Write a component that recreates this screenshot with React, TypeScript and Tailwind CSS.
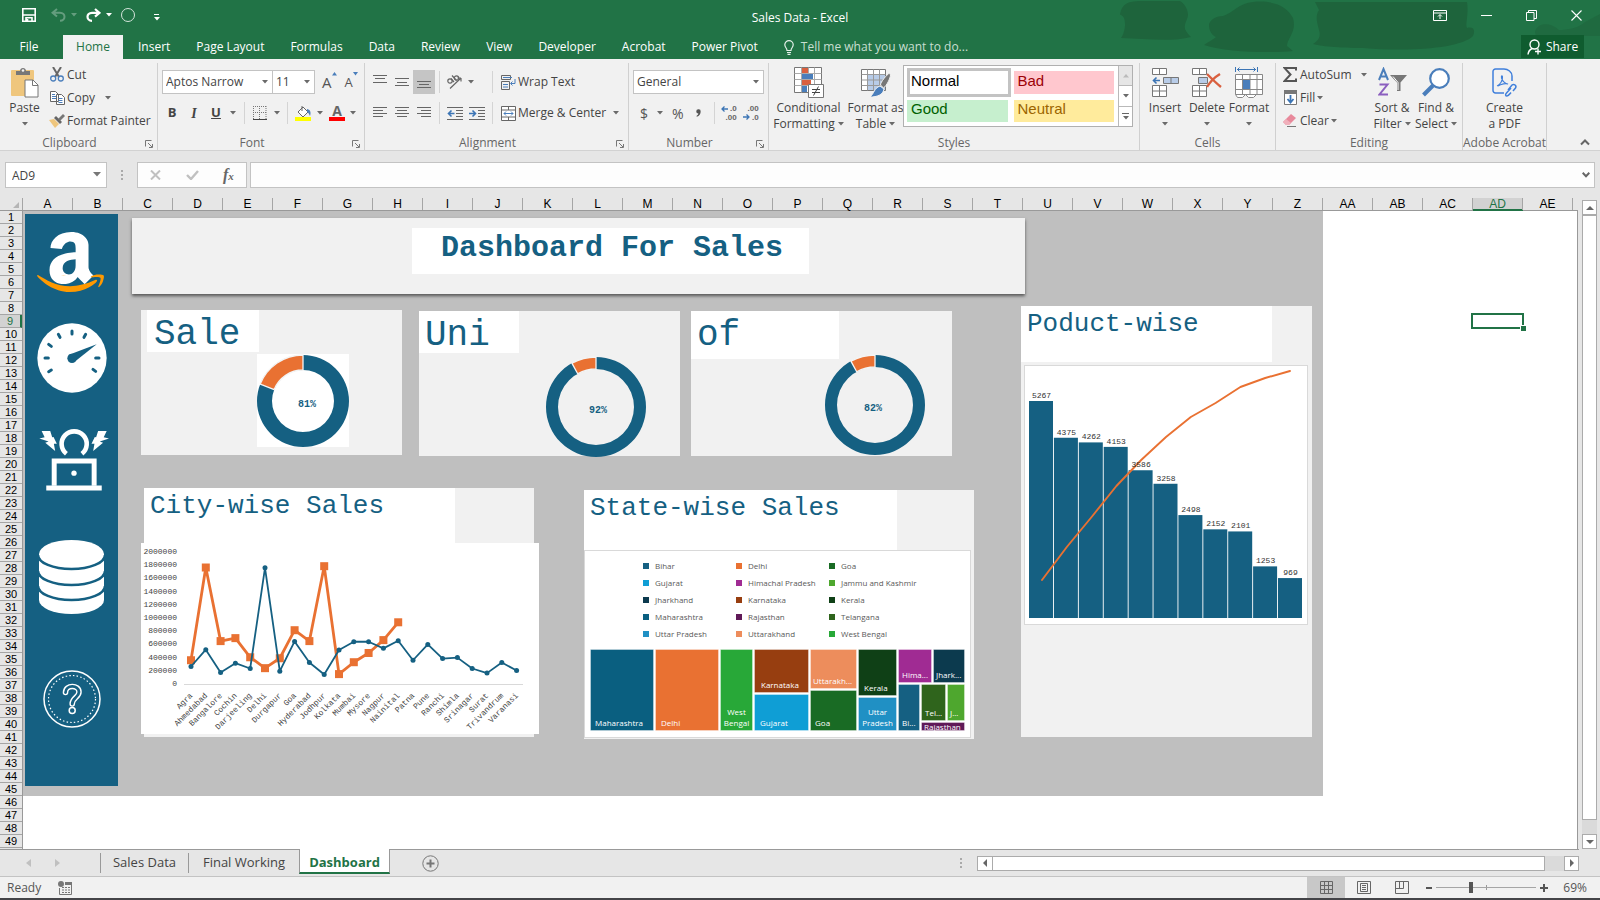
import React from "react";
import { FaAmazon } from "react-icons/fa";

type Kids = { children?: React.ReactNode };

/* ---------- small shared pieces ---------- */

function Caret({ className = "text-[#6a6a6a]" }: { className?: string }) {
  return (
    <svg className={"shrink-0 " + className} width="6" height="4" viewBox="0 0 6 4" fill="currentColor">
      <path d="M0 0h6L3 3.5z" />
    </svg>
  );
}

function Launcher() {
  return (
    <svg width="8" height="8" viewBox="0 0 8 8" fill="none" stroke="#777">
      <path d="M.5 6.5v-6h6M3 3l4 4M7.5 4v3.5H4" />
    </svg>
  );
}

function Group({ label, width, launcher, children }: Kids & { label: string; width: string; launcher?: boolean }) {
  return (
    <section className={"flex shrink-0 flex-col border-r border-[#d0d0d0] " + width}>
      <div className="h-[73px]">{children}</div>
      <div
        className={
          "relative flex h-[14px] items-center justify-center text-[12px] leading-[14px] whitespace-nowrap text-[#666] " +
          (launcher ? "pr-[18px]" : "")
        }
      >
        {label}
        {launcher && (
          <button aria-label={label + " settings"} className="absolute top-[4px] right-[4px]">
            <Launcher />
          </button>
        )}
      </div>
    </section>
  );
}

function BigButton({ icon, lines, width, inlineCaret, caret }: { icon: React.ReactNode; lines: string[]; width: string; inlineCaret?: boolean; caret?: boolean }) {
  return (
    <button className={"flex shrink-0 flex-col items-center pt-[3px] " + width}>
      <span className="mb-[2px] flex h-[32px] items-center justify-center">{icon}</span>
      {lines.map((t, i) => (
        <span key={t} className="flex h-[16px] items-center gap-[3px] whitespace-nowrap">
          {t}
          {inlineCaret && i === lines.length - 1 && <Caret />}
        </span>
      ))}
      {caret && (
        <span className="flex h-[16px] items-center">
          <Caret />
        </span>
      )}
    </button>
  );
}

function SmallButton({ icon, text, caret }: { icon: React.ReactNode; text: string; caret?: boolean }) {
  return (
    <button className="flex h-[23px] items-center gap-[2px] whitespace-nowrap">
      <span className="flex w-[16px] justify-center">{icon}</span>
      <span>{text}</span>
      {caret && <Caret />}
    </button>
  );
}

function Combo({ label, value, width }: { label: string; value: string; width: string }) {
  return (
    <span className={"relative block h-[24px] border border-[#c3c3c3] bg-white " + width}>
      <select aria-label={label} className="block h-full w-full appearance-none bg-transparent pl-[3px] text-[12px] text-[#444] outline-none">
        <option>{value}</option>
      </select>
      <span className="pointer-events-none absolute right-[4px] top-[9px]">
        <Caret />
      </span>
    </span>
  );
}

function Lines({ rows, active }: { rows: [number, number, number][]; active?: boolean }) {
  return (
    <button aria-label="Align" className={"flex h-[24px] w-[22px] items-center justify-center " + (active ? "bg-[#c5c5c5]" : "")}>
      <svg width="14" height="14" viewBox="0 0 14 14" stroke="#666" fill="none">
        {rows.map(([x1, x2, y]) => (
          <path key={y} d={`M${x1} ${y}.5H${x2}`} />
        ))}
      </svg>
    </button>
  );
}

function VSep() {
  return <span className="block h-[22px] w-px shrink-0 bg-[#d4d4d4]" />;
}

/* ---------- title bar and tabs ---------- */

function TitleBar() {
  return (
    <header className="relative bg-[#217346] text-white">
      <svg className="absolute right-0 top-0" width="500" height="59" viewBox="1100 0 500 59" fill="#1e643c">
        <path d="M1120 14C1122 4 1128 1 1140 1h40c4 2 8 8 8 14 0 4-4 8-3 14 2 4 4 6 6 8-18 5-46 2-70 1 4-6 5-14 3-20-2-4-4-2-4-4z" />
        <path d="M1209 25c0-4 6-9 14-9 10-3 16-13 30-14 20-2 34 4 40 16 4 14-6 20-6 28l6 5c-20 2-66 2-89-6 6-4 10-6 12-8-4-2-7-6-7-12z" />
        <path d="M1315 2h152c2 12-2 22 0 26 8-2 8 4 6 8-12 12-60 16-110 12-24 0-44-2-50-4 6-4 8-8 6-14-2-8-4-14 0-20z" />
        <path d="M1535 32c2-10 16-10 24-2 8 0 20-2 26-8l15-8v22h-64z" opacity=".6" />
      </svg>
      <div className="relative flex h-[35px] items-center">
        <div className="flex flex-1 items-center pl-[22px] pb-[5px]">
          <button aria-label="Save">
            <svg width="14" height="14" viewBox="0 0 14 14" fill="none" stroke="#fff" strokeWidth="1.6">
              <path d="M.8.8h12.4v12.4H.8zM1 7h12M4 13V9.8h6V13M5.5 11v2" />
            </svg>
          </button>
          <button aria-label="Undo" className="ml-[15px] flex items-center gap-[5px] opacity-30">
            <svg width="15" height="14" viewBox="0 0 15 14" fill="none" stroke="#fff" strokeWidth="2">
              <path d="M6 1 1.5 4.8 6 8.6M1.5 4.8H9c6 0 6 8 0 8" />
            </svg>
            <Caret className="text-white" />
          </button>
          <button aria-label="Redo" className="ml-[9px] flex items-center gap-[5px]">
            <svg width="15" height="14" viewBox="0 0 15 14" fill="none" stroke="#fff" strokeWidth="2.2">
              <path d="M9 1l4.5 3.8L9 8.6M13.5 4.8H6c-6 0-6 8 0 8" />
            </svg>
            <Caret className="text-white" />
          </button>
          <button aria-label="Touch mode" className="ml-[9px] h-[14px] w-[14px] rounded-full border border-[#d5e5dc]" />
          <button aria-label="Customize toolbar" className="ml-[19px] mt-[4px] flex flex-col gap-[2px]">
            <span className="h-px w-[5px] bg-white" />
            <Caret className="text-white" />
          </button>
        </div>
        <h1 className="-ml-[4px] text-[12px]">Sales Data - Excel</h1>
        <div className="flex flex-1 items-center justify-end gap-[34px] pr-[18px] pb-[5px]">
          <button aria-label="Ribbon display options">
            <svg width="14" height="11" viewBox="0 0 14 11" fill="none" stroke="#fff">
              <path d="M.5.5h13v10H.5zM.5 3h13M7 9V4.8M5 6.5l2-2 2 2" />
            </svg>
          </button>
          <button aria-label="Minimize">
            <svg width="11" height="11" viewBox="0 0 11 11" stroke="#fff">
              <path d="M0 5.5h11" />
            </svg>
          </button>
          <button aria-label="Restore">
            <svg width="11" height="11" viewBox="0 0 11 11" fill="none" stroke="#fff">
              <path d="M.5 2.5h7.5v8H.5zM2.5 2.5v-2h8v8H8" />
            </svg>
          </button>
          <button aria-label="Close">
            <svg width="11" height="11" viewBox="0 0 11 11" stroke="#fff" strokeWidth="1.1">
              <path d="M.5.5l10 10M10.5.5l-10 10" />
            </svg>
          </button>
        </div>
      </div>
      <nav className="relative flex h-[24px] items-stretch text-[12px]">
        <button className="w-[63px] pr-[5px]">File</button>
        <button className="w-[60px] bg-[#f1f1f1] text-[#217346]">Home</button>
        <div className="ml-[15px] flex items-center gap-[26px]">
          {["Insert", "Page Layout", "Formulas", "Data", "Review", "View", "Developer", "Acrobat", "Power Pivot"].map((t) => (
            <button key={t}>{t}</button>
          ))}
          <button className="flex items-center gap-[7px] text-[#c8dfd1]">
            <svg width="10" height="15" viewBox="0 0 10 15" fill="none" stroke="#e4f0e9" strokeWidth="1.2">
              <path d="M3 10.5C3 8 .8 7.5.8 4.8a4.2 4.2 0 0 1 8.4 0C9.2 7.5 7 8 7 10.5zM3 12.5h4M3.5 14.3h3" />
            </svg>
            Tell me what you want to do...
          </button>
        </div>
        <button className="mr-[16px] mb-px ml-auto flex w-[63px] items-center justify-center gap-[4px] bg-[#0f5c2f]">
          <svg width="15" height="16" viewBox="0 0 15 16" fill="none" stroke="#fff" strokeWidth="1.4">
            <circle cx="7.5" cy="5.5" r="4.5" />
            <path d="M1 15.5c.3-3 2-5 4-6M11 9.5v6M8 12.5h6" />
          </svg>
          Share
        </button>
      </nav>
    </header>
  );
}

/* ---------- ribbon ---------- */

function ClipboardGroup() {
  return (
    <Group label="Clipboard" width="w-[158px]" launcher>
      <div className="flex">
        <BigButton
          width="w-[49px]"
          caret
          lines={["Paste"]}
          icon={
            <svg width="29" height="31" viewBox="0 0 29 31">
              <rect x="1" y="3" width="23" height="26" rx="1" fill="#efc67d" />
              <path d="M6 8V4h4c0-4 6-4 6 0h4v4z" fill="#777" />
              <circle cx="13" cy="3.5" r="1.3" fill="#f1f1f1" />
              <path d="M15 13h8l5 5v12H15z" fill="#fff" stroke="#777" />
              <path d="M22.5 13v5.5H28" fill="none" stroke="#777" />
            </svg>
          }
        />
        <div className="flex flex-col items-start">
          <SmallButton
            text="Cut"
            icon={
              <svg width="14" height="15" viewBox="0 0 14 15" fill="none">
                <path d="M3 0l6 10M11 0L5 10" stroke="#666" strokeWidth="2" />
                <circle cx="3.2" cy="11.5" r="2.5" stroke="#4a7ebb" strokeWidth="1.3" />
                <circle cx="10.8" cy="11.5" r="2.5" stroke="#4a7ebb" strokeWidth="1.3" />
              </svg>
            }
          />
          <div className="flex items-center gap-[10px]">
            <SmallButton
              text="Copy"
              icon={
                <svg width="15" height="14" viewBox="0 0 15 14" fill="#fff" stroke="#666">
                  <path d="M.5.5h5l3 3v7h-8zM6.5 3.5h5l3 3v7h-8z" />
                  <path d="M2 3.5h3M2 5.5h4M2 7.5h4M8.5 7.5h4M8.5 9.5h4M8.5 11.5h4" stroke="#4a7ebb" />
                </svg>
              }
            />
            <Caret />
          </div>
          <SmallButton
            text="Format Painter"
            icon={
              <svg width="16" height="14" viewBox="0 0 16 14">
                <path d="M0 6l5-1 5 5-4 4z" fill="#efc67d" />
                <path d="M5 4l2-2 6 6-2 2z" fill="#666" />
                <path d="M9 5l5-5 2 2-5 5z" fill="#777" />
              </svg>
            }
          />
        </div>
      </div>
    </Group>
  );
}

function FontGroup() {
  return (
    <Group label="Font" width="w-[207px]" launcher>
      <div className="flex items-center pt-[7px] pl-[4px]">
        <Combo label="Font name" value="Aptos Narrow" width="w-[111px]" />
        <Combo label="Font size" value="11" width="-ml-px w-[43px]" />
        <button className="ml-[7px] flex items-start text-[15px] leading-[20px] text-[#555]">
          A
          <svg width="5" height="4" viewBox="0 0 5 4" fill="#4a7ebb">
            <path d="M0 3.5h5L2.5 0z" />
          </svg>
        </button>
        <button className="ml-[8px] flex items-start text-[13px] leading-[20px] text-[#555]">
          A
          <svg width="5" height="4" viewBox="0 0 5 4" fill="#4a7ebb">
            <path d="M0 0h5L2.5 3.5z" />
          </svg>
        </button>
      </div>
      <div className="flex h-[38px] items-center pl-[8px] text-[13px] text-[#444]">
        <button className="w-[12px] font-bold">B</button>
        <button className="ml-[10px] w-[12px] font-['Liberation_Serif',serif] text-[14px] font-bold italic">I</button>
        <button className="ml-[10px] w-[12px] font-bold underline">U</button>
        <span className="ml-[8px]"><Caret /></span>
        <span className="mx-[8px]"><VSep /></span>
        <button aria-label="Borders">
          <svg width="14" height="14" viewBox="0 0 14 14" fill="none" stroke="#777">
            <path d="M.5 0v13M6.5 0v13M13 0v13M0 .5h14M0 6.5h14" strokeDasharray="1 1" />
            <path d="M0 13.5h14" stroke="#444" />
          </svg>
        </button>
        <span className="ml-[7px]"><Caret /></span>
        <span className="mx-[7px]"><VSep /></span>
        <button aria-label="Fill colour">
          <svg width="17" height="16" viewBox="0 0 17 16" fill="none">
            <path d="M3 7l5-5 5 5-5 5z" fill="#fff" stroke="#666" />
            <path d="M7 6V1" stroke="#666" />
            <path d="M12 4c4 1 4 4 3 7-1-2-1-3-3-4z" fill="#4a7ebb" />
            <path d="M0 12h16v4H0z" fill="#ff0" />
          </svg>
        </button>
        <span className="ml-[5px]"><Caret /></span>
        <button aria-label="Font colour" className="ml-[6px] flex flex-col items-center text-[14px] leading-[12px] font-bold text-[#666]">
          A
          <span className="h-[4px] w-[16px] bg-[#f00]" />
        </button>
        <span className="ml-[5px]"><Caret /></span>
      </div>
    </Group>
  );
}

function AlignmentGroup() {
  return (
    <Group label="Alignment" width="w-[264px]" launcher>
      <div className="flex items-center pt-[7px] pl-[4px]">
        <Lines rows={[[0, 14, 0], [2, 12, 3], [0, 14, 7]]} />
        <Lines rows={[[0, 14, 3], [2, 12, 7], [0, 14, 10]]} />
        <Lines active rows={[[0, 14, 6], [2, 12, 9], [0, 14, 12]]} />
        <span className="mr-[6px] ml-[4px]"><VSep /></span>
        <button className="flex items-center gap-[5px]" aria-label="Orientation">
          <svg width="17" height="16" viewBox="0 0 17 16" fill="none" stroke="#666" strokeWidth="1.2">
            <path d="M4 14.5L15 4M15 4h-3.5M15 4v3.5" />
            <circle cx="4" cy="7" r="2.2" />
            <path d="M5 4.5l3 3.5M6 1.5l4.5 5" />
            <circle cx="10.5" cy="4" r="2.2" />
          </svg>
          <Caret />
        </button>
        <span className="mr-[7px] ml-[18px]"><VSep /></span>
        <SmallButton
          text="Wrap Text"
          icon={
            <svg width="15" height="15" viewBox="0 0 15 15" fill="none" stroke="#666">
              <path d="M9.5 4.5h-9v-4h9zM.5 6.5h8v8h-8z" />
              <path d="M2 2.5h9M2 9.5h5M2 12h5M14 4v4.5h-4M11.5 6.5l-2 2 2 2" stroke="#4a7ebb" />
            </svg>
          }
        />
      </div>
      <div className="flex h-[38px] items-center pl-[4px]">
        <Lines rows={[[0, 14, 1], [0, 10, 4], [0, 14, 7], [0, 10, 10]]} />
        <Lines rows={[[0, 14, 1], [2, 12, 4], [0, 14, 7], [2, 12, 10]]} />
        <Lines rows={[[0, 14, 1], [4, 14, 4], [0, 14, 7], [4, 14, 10]]} />
        <span className="mr-[7px] ml-[4px]"><VSep /></span>
        <button aria-label="Decrease indent">
          <svg width="16" height="13" viewBox="0 0 16 13" fill="none" stroke="#666">
            <path d="M0 .5h16M9 3.5h7M9 6.5h7M9 9.5h7M0 12.5h16" />
            <path d="M7.5 6.5H2M4.5 3.5l-3 3 3 3" stroke="#3c75b5" strokeWidth="1.6" />
          </svg>
        </button>
        <button aria-label="Increase indent" className="ml-[6px]">
          <svg width="16" height="13" viewBox="0 0 16 13" fill="none" stroke="#666">
            <path d="M0 .5h16M9 3.5h7M9 6.5h7M9 9.5h7M0 12.5h16" />
            <path d="M0 6.5h6M3.5 3.5l3 3-3 3" stroke="#3c75b5" strokeWidth="1.6" />
          </svg>
        </button>
        <span className="mr-[7px] ml-[7px]"><VSep /></span>
        <SmallButton
          text="Merge & Center"
          icon={
            <svg width="15" height="15" viewBox="0 0 15 15" fill="#fff" stroke="#666">
              <path d="M.5.5h14v14H.5zM.5 4h14M.5 11h14M7.5.5V4M7.5 11v3.5" />
              <path d="M3 7.5h9M5 5.5l-2 2 2 2M10 5.5l2 2-2 2" stroke="#4a7ebb" fill="none" />
            </svg>
          }
        />
        <span className="ml-[7px]"><Caret /></span>
      </div>
    </Group>
  );
}

function DecimalIcon({ up }: { up?: boolean }) {
  return (
    <span className="relative flex w-[16px] flex-col items-end font-['Liberation_Sans',Arial,sans-serif] text-[8px] leading-[9px] font-bold text-[#666]">
      <span>{up ? ".0" : ".00"}</span>
      <span>{up ? ".00" : ".0"}</span>
      <svg className={"absolute left-0 " + (up ? "top-[2px]" : "bottom-[2px]")} width="7" height="6" viewBox="0 0 7 6" fill="none" stroke="#3c75b5" strokeWidth="1.3">
        <path d={up ? "M7 3H1M3.5 .5L1 3l2.500 2.500" : "M0 3h6M3.500 .5L6 3 3.500 5.500"} />
      </svg>
    </span>
  );
}

function NumberGroup() {
  return (
    <Group label="Number" width="w-[140px]" launcher>
      <div className="pt-[7px] pl-[4px]">
        <Combo label="Number format" value="General" width="w-[131px]" />
      </div>
      <div className="flex h-[38px] items-center pl-[11px] text-[14px] text-[#555]">
        <button>$</button>
        <span className="ml-[9px]"><Caret /></span>
        <button className="ml-[9px]">%</button>
        <button aria-label="Comma style" className="ml-[12px]">
          <svg width="5" height="8" viewBox="0 0 6 9" fill="#555"><path d="M3 0a2.5 2.5 0 0 1 2.6 2.7C5.6 5.5 4 8 1 9L.6 8c1.4-.7 2.100-1.700 2.200-2.800A2.600 2.600 0 0 1 3 0z" /></svg>
        </button>
        <span className="mr-[6px] ml-[13px]"><VSep /></span>
        <button aria-label="Increase decimal"><DecimalIcon up /></button>
        <button aria-label="Decrease decimal" className="ml-[6px]"><DecimalIcon /></button>
      </div>
    </Group>
  );
}

function StylesGroup() {
  return (
    <Group label="Styles" width="w-[371px]">
      <div className="flex">
        <BigButton
          width="w-[79px]"
          inlineCaret
          lines={["Conditional", "Formatting"]}
          icon={
            <svg width="30" height="31" viewBox="0 0 30 31">
              <path d="M.5.5h27v25H.5z" fill="#fff" stroke="#777" />
              <path d="M.5 6.5h27M.5 12.5h27M.5 18.5h27M7.5.5v25M14.5.5v25M20.5.5v25" stroke="#aaa" />
              <path d="M8 1h6v5H8zM8 13h9v5H8z" fill="#d9603f" />
              <path d="M8 7h11v5H8zM8 19h5v6H8z" fill="#4a7ebb" />
              <path d="M14.5 17.5h15v13h-15z" fill="#fff" stroke="#777" />
              <path d="M18 22.5h8M18 25.5h8M24.5 19.5l-5 9" stroke="#444" fill="none" />
            </svg>
          }
        />
        <BigButton
          width="w-[55px]"
          inlineCaret
          lines={["Format as", "Table"]}
          icon={
            <svg width="30" height="29" viewBox="0 0 30 29">
              <path d="M.5 1.5h24v21H.5z" fill="#fff" stroke="#777" />
              <path d="M6 7h18v15H6z" fill="#b8cce8" />
              <path d="M.5 6.5h24M.5 12h24M.5 17.5h24M6.5 1.5v21M12.5 1.5v21M18.5 1.5v21" stroke="#999" />
              <path d="M28.5 5c-3 2-9 9-9 12l3 3c3-2 7-10 7-13z" fill="#777" stroke="#f1f1f1" />
              <path d="M19 18l4 3c-1 6-7 8-14 8 4-3 4-9 10-11z" fill="#4a7ebb" stroke="#f1f1f1" />
            </svg>
          }
        />
        <div className="mt-[2px] flex h-[62px] w-[230px] border border-[#b0b0b0] bg-white font-['Liberation_Sans',Arial,sans-serif] text-[15px] leading-[18px]">
          <div className="grid flex-1 grid-cols-2 gap-x-[6px] gap-y-[6px] p-[4px] pt-[5px] pl-[3px]">
            <button className="-my-[3px] -mr-[3px] border-[3px] border-[#c3c3c3] bg-white pb-[3px] pl-[1px] text-left text-black">Normal</button>
            <button className="bg-[#ffc7ce] pb-[3px] pl-[4px] text-left text-[#9c0006]">Bad</button>
            <button className="bg-[#c6efce] pb-[3px] pl-[4px] text-left text-[#006100]">Good</button>
            <button className="bg-[#ffeb9c] pb-[3px] pl-[4px] text-left text-[#9c6500]">Neutral</button>
          </div>
          <div className="flex w-[14px] flex-col divide-y divide-[#b9b9b9] border-l border-[#b9b9b9]">
            <button aria-label="Scroll styles up" className="flex flex-1 items-center justify-center bg-[#e6e6e6]">
              <svg width="6" height="4" viewBox="0 0 6 4" fill="#bbb"><path d="M0 3.5h6L3 0z" /></svg>
            </button>
            <button aria-label="Scroll styles down" className="flex flex-1 items-center justify-center"><Caret /></button>
            <button aria-label="More styles" className="flex flex-1 flex-col items-center justify-center gap-[2px]">
              <span className="h-px w-[7px] bg-[#666]" />
              <Caret />
            </button>
          </div>
        </div>
      </div>
    </Group>
  );
}

function CellsGroup() {
  return (
    <Group label="Cells" width="w-[136px]">
      <div className="flex pl-[4px]">
        <BigButton
          width="w-[42px]"
          caret
          lines={["Insert"]}
          icon={
            <svg width="27" height="29" viewBox="0 0 27 29" fill="#fff" stroke="#777">
              <path d="M.5.5h14v6H.5zM7.5.5v6M.5 17.5h14v11H.5zM.5 23h14M7.5 17.5v11" />
              <path d="M11.5 9.5h15v6h-15zM19 9.5v6" fill="#b8cce8" />
              <path d="M8 12.5H2M4.5 9.5l-3 3 3 3" stroke="#3c75b5" strokeWidth="1.6" fill="none" />
            </svg>
          }
        />
        <BigButton
          width="w-[42px]"
          caret
          lines={["Delete"]}
          icon={
            <svg width="30" height="29" viewBox="0 0 30 29" fill="#fff" stroke="#777">
              <path d="M.5.5h14v6H.5zM7.5.5v6M.5 17.5h14v11H.5zM.5 23h14M7.5 17.5v11" />
              <path d="M6.5 9.5h9v6h-9z" fill="#b8cce8" />
              <path d="M15 6c4 4 9 9 14 13M28 6c-5 3-10 8-13 13" stroke="#d9603f" strokeWidth="2.4" fill="none" />
            </svg>
          }
        />
        <BigButton
          width="w-[42px]"
          caret
          lines={["Format"]}
          icon={
            <svg width="28" height="31" viewBox="0 0 28 31" fill="#fff" stroke="#888">
              <path d="M.5 7.5h27v20H.5zM.5 12.5h27M.5 22.5h27M7.5 7.5v20M15 7.5v20M22 7.5v20M.5 27.5l2 3h5l3-3 3 3h5l3-3" />
              <path d="M8 13h7v9H8z" fill="#4a7ebb" stroke="none" />
              <path d="M.5 0v5M22.5 0v5M2 2.5h19M4.5.5l-2 2 2 2M18.5.5l2 2-2 2" stroke="#3c75b5" fill="none" />
            </svg>
          }
        />
      </div>
    </Group>
  );
}

function EditingGroup() {
  return (
    <Group label="Editing" width="w-[187px]">
      <div className="flex">
        <div className="flex w-[94px] flex-col items-start pl-[6px]">
          <div className="flex items-center gap-[9px]">
            <SmallButton
              text="AutoSum"
              icon={
                <svg width="14" height="15" viewBox="0 0 14 15" fill="none" stroke="#555" strokeWidth="2">
                  <path d="M13 3.5V1H1.5l6 6.5-6 6.5H13v-2.5" />
                </svg>
              }
            />
            <Caret />
          </div>
          <SmallButton
            text="Fill"
            caret
            icon={
              <svg width="13" height="15" viewBox="0 0 13 15" fill="#fff" stroke="#777">
                <path d="M.5.5h12v14H.5z" />
                <path d="M0 0h13v4H0z" fill="#777" stroke="none" />
                <path d="M6.5 5v7M3.5 9l3 3.5 3-3.5" stroke="#3c75b5" strokeWidth="1.8" fill="none" />
              </svg>
            }
          />
          <SmallButton
            text="Clear"
            caret
            icon={
              <svg width="14" height="13" viewBox="0 0 14 13">
                <path d="M8 0l5 4-7 7H3L0 8z" fill="#e8899b" />
                <path d="M3 5l5 4-2 2H3L0 8z" fill="#f0b0bb" />
                <path d="M4 12.5h9" stroke="#777" />
              </svg>
            }
          />
        </div>
        <BigButton
          width="w-[44px]"
          inlineCaret
          lines={["Sort &", "Filter"]}
          icon={
            <svg width="29" height="30" viewBox="0 0 29 30" fill="none">
              <path d="M1 13L5.5 2 10 13M2.5 9.5h6" stroke="#4a7ebb" strokeWidth="2" />
              <path d="M1.5 17.5h8L1.5 27.5h8.500" stroke="#8b5fbf" strokeWidth="2" />
              <path d="M12 8h17l-6.500 7.500V24h-3.500v-8.500z" fill="#777" />
              <path d="M15 9.500l5 6V23" stroke="#fff" />
            </svg>
          }
        />
        <BigButton
          width="w-[44px]"
          inlineCaret
          lines={["Find &", "Select"]}
          icon={
            <svg width="28" height="29" viewBox="0 0 28 29" fill="none">
              <circle cx="17.5" cy="10.5" r="9.3" fill="#fff" stroke="#4a7ebb" strokeWidth="2.2" />
              <path d="M11 17.5L1.5 27" stroke="#4a7ebb" strokeWidth="4" />
            </svg>
          }
        />
      </div>
    </Group>
  );
}

function AcrobatGroup() {
  return (
    <Group label="Adobe Acrobat" width="w-[84px]">
      <div className="flex justify-center">
        <BigButton
          width="w-[60px]"
          lines={["Create", "a PDF"]}
          icon={
            <svg width="26" height="29" viewBox="0 0 26 29" fill="none" stroke="#3f7fdb" strokeWidth="1.5">
              <path d="M12 25H3.5A2.5 2.5 0 0 1 1 22.5V3.5A2.5 2.5 0 0 1 3.5 1H12c4 0 8 3 8 7v5" />
              <path d="M5 18c3-1 6-6 5.500-9 0-2-1.500-1.500-1 1 .8 3 4 6 6.500 6-2-1-7 0-10 2" strokeWidth="1.1" />
              <path d="M16 22l4-5c2-1.500 5 .5 3.500 3L21 23M19 20l-4.500 5c-1.500 1.500-1 3 .5 3 1.500 0 2-1 4-3.500" />
            </svg>
          }
        />
      </div>
    </Group>
  );
}

function Ribbon() {
  return (
    <div className="flex h-[92px] overflow-hidden border-b border-[#d2d2d2] bg-[#f1f1f1] pt-[4px] text-[12px] text-[#444]">
      <ClipboardGroup />
      <FontGroup />
      <AlignmentGroup />
      <NumberGroup />
      <StylesGroup />
      <CellsGroup />
      <EditingGroup />
      <AcrobatGroup />
      <button aria-label="Collapse ribbon" className="mr-[10px] mb-[4px] ml-auto self-end">
        <svg width="10" height="7" viewBox="0 0 10 7" fill="none" stroke="#666" strokeWidth="2">
          <path d="M1 5.5l4-4 4 4" />
        </svg>
      </button>
    </div>
  );
}

/* ---------- formula bar ---------- */

function FormulaBar() {
  return (
    <div className="flex h-[47px] items-start bg-[#e6e6e6] pt-[11px] pr-[5px] pl-[5px]">
      <div className="relative h-[26px] w-[102px] border border-[#c3c3c3] bg-white">
        <input aria-label="Name box" defaultValue="AD9" className="block h-full w-full bg-transparent pl-[6px] text-[12px] text-[#444] outline-none" />
        <svg className="absolute top-[9px] right-[5px]" width="8" height="5" viewBox="0 0 8 5" fill="#777"><path d="M0 0h8L4 4.5z" /></svg>
      </div>
      <div className="mx-[14px] flex h-[26px] flex-col justify-center gap-[2px]">
        <span className="h-[2px] w-[2px] bg-[#aaa]" />
        <span className="h-[2px] w-[2px] bg-[#aaa]" />
        <span className="h-[2px] w-[2px] bg-[#aaa]" />
      </div>
      <div className="flex h-[26px] w-[110px] items-center justify-around border border-[#c3c3c3] bg-[#fdfdfd]">
        <button aria-label="Cancel">
          <svg width="11" height="10" viewBox="0 0 11 10" stroke="#c0c0c0" strokeWidth="2"><path d="M1 .5l9 9M10 .5l-9 9" /></svg>
        </button>
        <button aria-label="Enter">
          <svg width="13" height="10" viewBox="0 0 13 10" fill="none" stroke="#c0c0c0" strokeWidth="2.4"><path d="M1 5l4 4 7-8" /></svg>
        </button>
        <button className="font-['Liberation_Serif',serif] text-[16px] leading-none font-bold text-[#666] italic">
          f<span className="text-[11px]">x</span>
        </button>
      </div>
      <div className="relative ml-[3px] h-[26px] flex-1 border border-[#c3c3c3] bg-[#fdfdfd]">
        <input aria-label="Formula" className="h-full w-full bg-transparent px-2 text-[12px] outline-none" />
        <svg className="absolute top-[9px] right-[4px]" width="8" height="6" viewBox="0 0 8 6" fill="none" stroke="#666" strokeWidth="2"><path d="M.7.8L4 4.2 7.3.8" /></svg>
      </div>
    </div>
  );
}

/* ---------- charts and dashboard cards ---------- */

function Heading({ children, className }: Kids & { className: string }) {
  return (
    <h2 className={"absolute bg-white font-['Liberation_Mono','Courier_New',monospace] whitespace-nowrap text-[#156082] " + className}>{children}</h2>
  );
}

function Donut({ className, label, labelX, share, r, hole }: { className: string; label: string; labelX: number; share: number; r: number; hole: number }) {
  const a = share * 2 * Math.PI;
  const p = (d: number) => `${-Math.sin(a) * d} ${-Math.cos(a) * d}`;
  return (
    <svg className={"absolute " + className} viewBox={`${-r - 1} ${-r - 1} ${2 * r + 2} ${2 * r + 2}`}>
      <path fillRule="evenodd" fill="#156082" d={`M${-r} 0a${r} ${r} 0 1 0 ${2 * r} 0a${r} ${r} 0 1 0 ${-2 * r} 0zM${-hole} 0a${hole} ${hole} 0 1 0 ${2 * hole} 0a${hole} ${hole} 0 1 0 ${-2 * hole} 0z`} />
      <path fill="#e97132" stroke="#f4f4f4" strokeWidth="1.3" d={`M0 ${-r}A${r} ${r} 0 0 0 ${p(r)}L${p(hole)}A${hole} ${hole} 0 0 1 0 ${-hole}z`} />
      <text x={labelX} y="6" textAnchor="middle" className="fill-[#156082] font-['Liberation_Mono','Courier_New',monospace] text-[10px] font-bold">{label}</text>
    </svg>
  );
}

const cities = ["Agra", "Ahmedabad", "Bangalore", "Cochin", "Darjeeling", "Delhi", "Durgapur", "Goa", "Hyderabad", "Jodhpur", "Kolkata", "Mumbai", "Mysore", "Nagpur", "Nainital", "Patna", "Pune", "Ranchi", "Shimla", "Srinagar", "Surat", "Trivandrum", "Varanasi"];
const lastYear = [360, 1765, 650, 695, 405, 240, 390, 815, 650, 1785, 150, 330, 470, 665, 935];
const thisYear = [265, 520, 175, 315, 235, 1760, 195, 645, 325, 145, 515, 640, 640, 540, 655, 360, 600, 385, 400, 235, 165, 325, 205];

function CityChart() {
  const x = (i: number) => 50 + i * 14.8;
  const y = (v: number) => 141 - v * 0.066;
  const line = (d: number[]) => d.map((v, i) => `${x(i)},${y(v)}`).join(" ");
  return (
    <svg className="absolute top-[332px] left-[118px] h-[191px] w-[398px] bg-white font-['Liberation_Mono','Courier_New',monospace] text-[8px]" viewBox="0 0 398 191">
      {[0, 200, 400, 600, 800, 1000, 1200, 1400, 1600, 1800, 2000].map((v) => (
        <text key={v} x="36" y={y(v) + 2} textAnchor="end" fill="#444">{v * 1000}</text>
      ))}
      <path d="M43 141.5H382" stroke="#d9d9d9" />
      <polyline points={line(lastYear)} fill="none" stroke="#e97132" strokeWidth="2.8" strokeLinejoin="round" />
      {lastYear.map((v, i) => (
        <rect key={i} x={x(i) - 4} y={y(v) - 4} width="8" height="8" fill="#e97132" />
      ))}
      <polyline points={line(thisYear)} fill="none" stroke="#156082" strokeWidth="1.8" strokeLinejoin="round" />
      {thisYear.map((v, i) => (
        <circle key={i} cx={x(i)} cy={y(v)} r="2.5" fill="#156082" />
      ))}
      {cities.map((c, i) => (
        <text key={c} textAnchor="end" fill="#444" transform={`translate(${x(i) + 2} 153) rotate(-45)`}>{c}</text>
      ))}
    </svg>
  );
}

const states: [string, string][] = [
  ["Bihar", "#156082"], ["Delhi", "#e97132"], ["Goa", "#196b24"],
  ["Gujarat", "#0f9ed5"], ["Himachal Pradesh", "#a02b93"], ["Jammu and Kashmir", "#4ea72e"],
  ["Jharkhand", "#0c3a4e"], ["Karnataka", "#973e10"], ["Kerala", "#0f4016"],
  ["Maharashtra", "#0a5f80"], ["Rajasthan", "#601a58"], ["Telangana", "#2f641c"],
  ["Uttar Pradesh", "#2090c4"], ["Uttarakhand", "#ed8d5c"], ["West Bengal", "#28a838"],
];

/* x, y, width, height, colour, label lines, label inset */
const tiles: [number, number, number, number, string, string[], number][] = [
  [5, 98, 64, 82, "#0a5f80", ["Maharashtra"], 5],
  [70, 98, 64, 82, "#e97132", ["Delhi"], 6],
  [135, 98, 33, 82, "#28a838", ["West", "Bengal"], 0],
  [169, 98, 55, 44, "#973e10", ["Karnataka"], 7],
  [169, 143, 55, 37, "#0f9ed5", ["Gujarat"], 6],
  [225, 98, 47, 40, "#ed8d5c", ["Uttarakh..."], 3],
  [225, 139, 47, 41, "#196b24", ["Goa"], 5],
  [273, 98, 39, 47, "#0f4016", ["Kerala"], 6],
  [273, 146, 39, 34, "#2090c4", ["Uttar", "Pradesh"], 0],
  [313, 98, 34, 34, "#a02b93", ["Hima..."], 4],
  [348, 98, 32, 34, "#0c3a4e", ["Jhark..."], 3],
  [313, 133, 22, 47, "#156082", ["Bi..."], 4],
  [336, 133, 25, 37, "#2f641c", ["Tel..."], 4],
  [362, 133, 18, 37, "#4ea72e", ["J..."], 3],
  [336, 171, 44, 9, "#601a58", ["Rajasthan"], 3],
];

function StateChart() {
  return (
    <svg className="absolute top-[339px] left-[561px] h-[188px] w-[387px] border border-[#d9d9d9] bg-white text-[8px]" viewBox="0 0 385 186">
      {states.map(([name, color], i) => {
        const cx = 57 + (i % 3) * 93;
        const cy = 15 + Math.floor(i / 3) * 17;
        return (
          <g key={name}>
            <rect x={cx + 1} y={cy - 3} width="6" height="6" fill={color} />
            <text x={cx + 13} y={cy + 3} fill="#595959">{name}</text>
          </g>
        );
      })}
      {tiles.map(([x, y, w, h, color, label, inset]) => (
        <g key={label[0] + x}>
          <rect x={x + 0.5} y={y + 0.5} width={w - 1} height={h - 1} fill={color} stroke="#fff" strokeOpacity=".35" />
          {label.map((t, i) => (
            <text
              key={t}
              fill="#fff"
              x={inset ? x + inset : x + w / 2}
              textAnchor={inset ? "start" : "middle"}
              y={y + h - (h < 12 ? 1 : 5) - (label.length - 1 - i) * 11}
              className="font-medium"
            >
              {t}
            </text>
          ))}
        </g>
      ))}
    </svg>
  );
}

const products = [5267, 4375, 4262, 4153, 3586, 3258, 2498, 2152, 2101, 1253, 969];
const cumulative = [45, 78, 108, 139, 165, 188, 208, 222, 238, 247, 254];

function ProductChart() {
  return (
    <svg className="absolute top-[154px] left-[1001px] h-[260px] w-[284px] border border-[#d9d9d9] bg-white font-['Liberation_Mono','Courier_New',monospace] text-[8px]" viewBox="0 0 282 258">
      {products.map((v, i) => {
        const h = v * 0.0412;
        const x = 4 + i * 24.9;
        return <rect key={v} x={x} y={252 - h} width="24" height={h} fill="#156082" />;
      })}
      <polyline points={cumulative.map((v, i) => `${17 + i * 24.8},${259 - v}`).join(" ")} fill="none" stroke="#e97132" strokeWidth="1.9" strokeLinejoin="round" strokeLinecap="round" />
      {products.map((v, i) => (
        <text key={v} x={16.5 + i * 24.9} y={249 - v * 0.0412} textAnchor="middle" fill="#333">{v}</text>
      ))}
    </svg>
  );
}

function Sidebar() {
  return (
    <aside className="absolute top-[3px] left-[2px] flex h-[572px] w-[93px] flex-col items-center bg-[#156082] pt-[13px]">
      <a href="#home" aria-label="Home" className="relative h-[79px] w-[71px]">
        <FaAmazon className="absolute h-[79px] w-[69px] text-white [clip-path:polygon(0_0,100%_0,100%_69%,77%_69%,77%_72.3%,0_72.3%)]" />
        <FaAmazon className="absolute -top-[9px] h-[79px] w-[69px] text-[#ff9900] [clip-path:polygon(0_72.3%,77%_72.3%,77%_69%,100%_69%,100%_100%,0_100%)]" />
      </a>
      <a href="#performance" aria-label="Performance" className="mt-[17px]">
        <svg width="70" height="70" viewBox="112 400 210 210">
          <circle cx="217" cy="505" r="104" fill="#fff" />
          <g stroke="#156082" strokeWidth="9" strokeLinecap="round">
            <path d="M217 424v9M258 434l-5 9M176 434l5 9M147 464l8 6M136 505h10M288 505h10M147 546l8-5M280 539l8 6" />
          </g>
          <path d="M206 496L291 464 225 516z" fill="#156082" />
          <circle cx="217" cy="506" r="14" fill="#156082" />
        </svg>
      </a>
      <a href="#stress" aria-label="Workload" className="mt-[37px]">
        <svg width="70" height="62" viewBox="44 90 212 186" fill="none" stroke="#fff" className="translate-x-[2px] overflow-visible">
          <path d="M127 161A38 38 0 1 1 174 161" strokeWidth="14" />
          <path d="M90 258v-75h121v75" strokeWidth="15" />
          <path d="M66 265h168" strokeWidth="15" />
          <circle cx="150" cy="220" r="8" fill="#fff" stroke="none" />
          <path d="M52 92h26l6 19 4-1 10 21-9 0 4 22-30-25 10-4-28-9 16-4zM249 92h-26l-6 19-4-1-10 21 9 0-4 22 30-25-10-4 28-9-16-4z" fill="#fff" stroke="none" />
        </svg>
      </a>
      <a href="#data" aria-label="Data" className="mt-[48px]">
        <svg width="65" height="74" viewBox="0 0 65 74">
          <path d="M0 14a32.5 14 0 0 1 65 0v46a32.5 14 0 0 1-65 0z" fill="#fff" />
          <path d="M-1 15a33.5 14 0 0 0 67 0M-1 31a33.5 14 0 0 0 67 0M-1 46a33.5 14 0 0 0 67 0" fill="none" stroke="#156082" strokeWidth="2.6" />
        </svg>
      </a>
      <a href="#help" aria-label="Help" className="mt-[56px]">
        <svg width="58" height="58" viewBox="0 0 58 58" fill="none" stroke="#fff">
          <circle cx="29" cy="29" r="28" strokeWidth="1.5" />
          <circle cx="29" cy="29" r="23.5" strokeWidth="1.2" strokeDasharray="1.5 2.2" />
          <g strokeLinecap="round" strokeLinejoin="round">
            <path d="M22.5 22.5c0-8 13.5-8 13.5-.5 0 5.5-6.800 5.500-6.800 12" strokeWidth="5.6" />
            <path d="M22.5 22.5c0-8 13.5-8 13.5-.5 0 5.5-6.800 5.500-6.800 12" strokeWidth="2.8" stroke="#156082" />
          </g>
          <circle cx="29.2" cy="40.5" r="3" strokeWidth="1.5" />
        </svg>
      </a>
    </aside>
  );
}

function Dashboard() {
  return (
    <div className="absolute top-0 left-0 h-[585px] w-[1300px] bg-[#bfbfbf]">
      <Sidebar />
      <div className="absolute top-[7px] left-[109px] h-[76px] w-[893px] bg-[#f1f1f1] shadow-[0_2px_3px_#555]">
        <Heading className="top-[10px] left-[280px] h-[46px] w-[397px] pl-[29px] text-[30px] leading-[40px] font-bold">Dashboard For Sales</Heading>
      </div>
      <div className="absolute top-[99px] left-[118px] h-[145px] w-[261px] bg-[#f1f1f1]">
        <Heading className="top-0 left-[6px] h-[42px] w-[112px] pl-[7px] text-[36px] leading-[50px]">Sale</Heading>
        <span className="absolute top-[44px] left-[116px] h-[93px] w-[92px] bg-white" />
        <Donut className="top-[44px] left-[115px] h-[94px] w-[94px]" label="81%" labelX={4} share={0.19} r={46} hole={31} />
      </div>
      <div className="absolute top-[100px] left-[396px] h-[145px] w-[261px] bg-[#f1f1f1]">
        <Heading className="top-0 left-0 h-[42px] w-[100px] pl-[6px] text-[36px] leading-[50px]">Uni</Heading>
        <Donut className="top-[45px] left-[126px] h-[102px] w-[102px]" label="92%" labelX={2} share={0.08} r={50} hole={38} />
      </div>
      <div className="absolute top-[100px] left-[668px] h-[145px] w-[261px] bg-[#f1f1f1]">
        <Heading className="top-0 left-0 h-[48px] w-[148px] pl-[6px] text-[36px] leading-[50px]">of</Heading>
        <Donut className="top-[43px] left-[133px] h-[102px] w-[102px]" label="82%" labelX={-2} share={0.08} r={50} hole={38} />
      </div>
      <div className="absolute top-[277px] left-[121px] h-[249px] w-[390px] bg-[#f1f1f1]">
        <Heading className="top-0 left-0 h-[56px] w-[311px] pl-[6px] text-[26px] leading-[36px]">City-wise Sales</Heading>
      </div>
      <CityChart />
      <div className="absolute top-[279px] left-[561px] h-[249px] w-[390px] bg-[#f1f1f1]">
        <Heading className="top-0 left-0 h-[60px] w-[313px] pl-[6px] text-[26px] leading-[36px]">State-wise Sales</Heading>
      </div>
      <StateChart />
      <div className="absolute top-[95px] left-[998px] h-[431px] w-[291px] bg-[#f1f1f1]">
        <Heading className="top-0 left-0 h-[56px] w-[251px] pl-[6px] text-[26px] leading-[36px]">Poduct-wise</Heading>
      </div>
      <ProductChart />
    </div>
  );
}

/* ---------- sheet ---------- */

const columns = [..."ABCDEFGHIJKLMNOPQRSTUVWXYZ".split(""), "AA", "AB", "AC", "AD", "AE"];
const rows = Array.from({ length: 49 }, (_, i) => i + 1);

function ScrollArrow({ d, label, className }: { d: string; label: string; className: string }) {
  return (
    <button aria-label={label} className={"flex shrink-0 items-center justify-center border border-[#ababab] bg-white " + className}>
      <svg width="8" height="8" viewBox="0 0 8 8" fill="#666"><path d={d} /></svg>
    </button>
  );
}

function Sheet() {
  return (
    <main className="flex bg-[#e6e6e6]">
      <div className="flex min-w-0 flex-1 flex-col">
        <div className="flex h-[13px] border-b border-[#999] font-['Liberation_Sans',Arial,sans-serif] text-[12px] leading-[12px] text-black">
          <div className="flex w-[23px] shrink-0 items-end justify-end border-r border-[#a5a5a5] pr-[3px] pb-[2px]">
            <svg width="6" height="6" viewBox="0 0 6 6" fill="#b5b5b5"><path d="M6 0v6H0z" /></svg>
          </div>
          {columns.map((c) => (
            <div
              key={c}
              className={
                "h-[12px] w-[50px] shrink-0 border-r border-[#a5a5a5] text-center " +
                (c === "AD" ? "bg-[#d2d2d2] text-[#217346] shadow-[0_1px_0_#217346,inset_0_-1px_0_#217346]" : "")
              }
            >
              {c}
            </div>
          ))}
        </div>
        <div className="flex flex-1">
          <div className="w-[23px] shrink-0 border-r border-[#999] pb-px font-['Liberation_Sans',Arial,sans-serif] text-[11px] leading-[12px] text-black">
            {rows.map((r) => (
              <div
                key={r}
                className={
                  "h-[13px] border-b border-[#a5a5a5] text-center " +
                  (r === 9 ? "border-r-2 border-r-[#217346] bg-[#d2d2d2] text-[#217346]" : "")
                }
              >
                {r}
              </div>
            ))}
          </div>
          <div className="relative flex-1 overflow-hidden border-r border-[#999] bg-white">
            <Dashboard />
            <div className="absolute top-[102px] left-[1448px] h-[16px] w-[53px] border-2 border-[#217346]">
              <span className="absolute -right-[4px] -bottom-[4px] h-[6px] w-[6px] border-t border-l border-white bg-[#217346]" />
            </div>
          </div>
        </div>
      </div>
      <div className="ml-[4px] mr-[3px] flex w-[15px] flex-col pt-[2px]">
        <ScrollArrow label="Scroll up" d="M0 6h8L4 2z" className="h-[15px]" />
        <div className="flex flex-1 flex-col bg-[#dadada]">
          <div className="mb-[14px] flex-1 border border-[#ababab] bg-white" />
        </div>
        <ScrollArrow label="Scroll down" d="M0 2h8L4 6z" className="h-[15px]" />
      </div>
    </main>
  );
}

function SheetTabs() {
  return (
    <div className="flex h-[28px] bg-[#e6e6e6] text-[13px] text-[#444]">
      <div className="flex flex-1 border-b border-[#c3c3c3]">
        <div className="flex w-[299px] border-t border-[#999]">
          <button aria-label="Previous sheet" className="ml-[26px]">
            <svg width="5" height="8" viewBox="0 0 5 8" fill="#c0c0c0"><path d="M5 0v8L0 4z" /></svg>
          </button>
          <button aria-label="Next sheet" className="ml-[24px]">
            <svg width="5" height="8" viewBox="0 0 5 8" fill="#c0c0c0"><path d="M0 0v8l5-4z" /></svg>
          </button>
          <button className="mt-[3px] ml-[40px] h-[20px] w-[88px] border-l border-[#999] pb-[2px] leading-[18px]">Sales Data</button>
          <button className="mt-[3px] h-[20px] flex-1 border-l border-[#999] pb-[2px] leading-[18px]">Final Working</button>
        </div>
        <button className="h-[25px] w-[91px] border-x border-b-2 border-x-[#999] border-b-[#217346] bg-white pt-[4px] font-bold text-[#217346]">Dashboard</button>
        <div className="flex flex-1 items-center border-t border-[#999]">
          <button aria-label="New sheet" className="ml-[32px]">
            <svg width="17" height="17" viewBox="0 0 17 17" fill="none" stroke="#777">
              <circle cx="8.5" cy="8.5" r="7.7" />
              <path d="M8.5 4.5v8M4.5 8.5h8" strokeWidth="2" />
            </svg>
          </button>
          <div className="ml-auto flex flex-col gap-[2px]">
            <span className="h-[2px] w-[2px] bg-[#aaa]" />
            <span className="h-[2px] w-[2px] bg-[#aaa]" />
            <span className="h-[2px] w-[2px] bg-[#aaa]" />
          </div>
          <div className="ml-[15px] flex h-[15px] w-[602px] bg-[#dadada]">
            <ScrollArrow label="Scroll left" d="M6 0v8L2 4z" className="w-[16px]" />
            <div className="-ml-px w-[553px] border border-[#ababab] bg-white" />
            <ScrollArrow label="Scroll right" d="M2 0v8l4-4z" className="ml-auto w-[15px]" />
          </div>
        </div>
      </div>
      <div className="w-[21px] border-b border-[#c3c3c3]" />
    </div>
  );
}

function StatusBar() {
  return (
    <footer className="flex h-[23px] items-center border-b-2 border-[#444448] bg-[#f1f1f1] text-[12px] text-[#555]">
      <span className="ml-[7px]">Ready</span>
      <button aria-label="Record macro" className="ml-[17px]">
        <svg width="14" height="14" viewBox="0 0 14 14" fill="none" stroke="#777">
          <path d="M1.5 7v6.5h12v-12H8" />
          <circle cx="3" cy="3" r="3" fill="#777" stroke="none" />
          <path d="M7 1h7v3H7z" fill="#777" stroke="none" />
          <path d="M4 6.5h8M4 9h8M4 11.5h8" strokeDasharray="2 1" />
        </svg>
      </button>
      <div className="ml-auto flex h-full items-center">
        <button aria-label="Normal view" className="flex h-full w-[38px] items-center justify-center bg-[#c8c8c8]">
          <svg width="13" height="13" viewBox="0 0 13 13" fill="none" stroke="#666"><path d="M.5.5h12v12H.5zM4.5.5v12M8.5.5v12M.5 4.5h12M.5 8.5h12" /></svg>
        </button>
        <button aria-label="Page layout view" className="flex w-[38px] items-center justify-center">
          <svg width="14" height="13" viewBox="0 0 14 13" fill="none" stroke="#666"><path d="M.5.5h13v12H.5zM3.5 2.5h7v8h-7zM5 4.5h4M5 6.5h4M5 8.5h4" /></svg>
        </button>
        <button aria-label="Page break view" className="flex w-[38px] items-center justify-center">
          <svg width="14" height="13" viewBox="0 0 14 13" fill="none" stroke="#666"><path d="M.5.5h13v12H.5zM.5 7.5h8v-7M4.5.5v7" /></svg>
        </button>
        <button aria-label="Zoom out" className="ml-[5px] h-[2px] w-[6px] bg-[#555]" />
        <div className="relative ml-[4px] flex w-[100px] items-center">
          <span className="absolute left-[50px] h-[5px] w-px bg-[#999]" />
          <input
            type="range"
            aria-label="Zoom"
            min={0}
            max={200}
            defaultValue={69}
            className="relative h-[11px] w-full appearance-none bg-transparent [&::-webkit-slider-runnable-track]:h-px [&::-webkit-slider-runnable-track]:bg-[#a5a5a5] [&::-webkit-slider-thumb]:-mt-[5px] [&::-webkit-slider-thumb]:h-[11px] [&::-webkit-slider-thumb]:w-[4px] [&::-webkit-slider-thumb]:appearance-none [&::-webkit-slider-thumb]:bg-[#555]"
          />
        </div>
        <button aria-label="Zoom in" className="ml-[4px]">
          <svg width="8" height="8" viewBox="0 0 8 8" stroke="#555" strokeWidth="2"><path d="M4 0v8M0 4h8" /></svg>
        </button>
        <span className="mr-[13px] ml-[15px]">69%</span>
      </div>
    </footer>
  );
}

export default function App() {
  return (
    <div className="flex min-h-screen w-full flex-col overflow-hidden bg-[#e6e6e6] font-['Open_Sans','Noto_Sans',sans-serif]">
      <TitleBar />
      <Ribbon />
      <FormulaBar />
      <Sheet />
      <SheetTabs />
      <StatusBar />
    </div>
  );
}
